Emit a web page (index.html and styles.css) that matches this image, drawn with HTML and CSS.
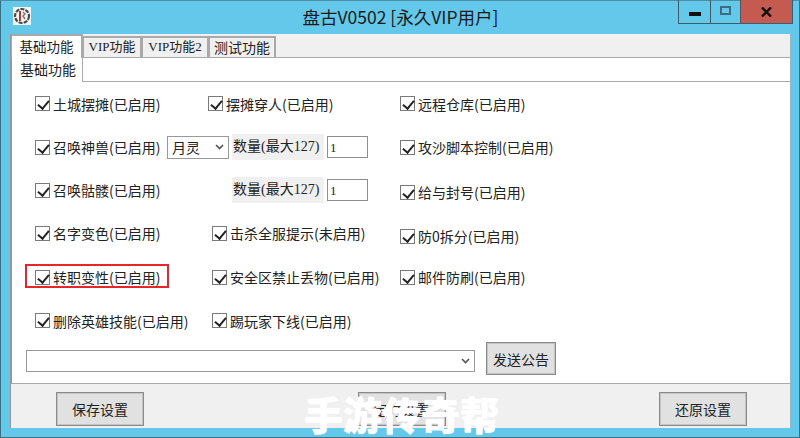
FILE: index.html
```html
<!DOCTYPE html>
<html lang="zh-CN">
  <head>
    <meta charset="UTF-8" />
    <title>盘古V0502</title>
    <link rel="stylesheet" href="styles.css">
  </head>
  <body>
    <div class="window">
      <!-- Title bar -->
      <header class="titlebar">
        <svg class="app-icon" width="18" height="18" viewBox="0 0 18 18">
          <rect width="18" height="18" fill="#f6f3f1" />
          <circle cx="9" cy="9" r="7" fill="none" stroke="#4a4a4a" stroke-width="2.2" stroke-dasharray="4 1.2" />
          <path d="M7 4v10" fill="none" stroke="#b33" stroke-width="2" />
          <path d="M10 5l2 2-2 2 2 3" fill="none" stroke="#777" stroke-width="1.4" />
        </svg>
        <h1 class="title">盘古V0502 [永久VIP用户]</h1>
        <div class="win-buttons">
          <div class="win-btn win-min"><span class="min-glyph"></span></div>
          <div class="win-btn win-max"><span class="max-glyph"></span></div>
          <div class="win-btn win-close">
            <svg width="11" height="10" viewBox="0 0 11 10"><path d="M1 0.5l9 9M10 0.5l-9 9" stroke="#111" stroke-width="2.4" fill="none" /></svg>
          </div>
        </div>
      </header>

      <div class="client">
        <!-- Outer tabs -->
        <div class="tabs">
          <div class="tab tab-active">基础功能</div>
          <div class="tab tab-vip">VIP功能</div>
          <div class="tab tab-vip2">VIP功能2</div>
          <div class="tab tab-test">测试功能</div>
        </div>

        <div class="panel">
          <div class="subtabs">
            <div class="subtab">基础功能</div>
          </div>

          <div class="form">
            <div class="row row-1">
              <label class="check col-a"><span class="box"></span>土城摆摊(已启用)</label>
              <label class="check col-b"><span class="box"></span>摆摊穿人(已启用)</label>
              <label class="check col-c"><span class="box"></span>远程仓库(已启用)</label>
            </div>
            <div class="row row-2">
              <div class="col-wide">
                <label class="check"><span class="box"></span>召唤神兽(已启用)</label>
                <div class="select">月灵<svg width="9" height="6" viewBox="0 0 9 6"><path d="M1 1l3.5 3.5L8 1" fill="none" stroke="#555" stroke-width="1.6" /></svg></div>
                <span class="qty-label">数量(最大127)</span>
                <div class="qty-input">1</div>
              </div>
              <label class="check col-c"><span class="box"></span>攻沙脚本控制(已启用)</label>
            </div>
            <div class="row row-3">
              <div class="col-wide">
                <label class="check check-fixed"><span class="box"></span>召唤骷髅(已启用)</label>
                <span class="qty-label">数量(最大127)</span>
                <div class="qty-input">1</div>
              </div>
              <label class="check col-c col-c-low"><span class="box"></span>给与封号(已启用)</label>
            </div>
            <div class="row row-4">
              <label class="check col-a-short"><span class="box"></span>名字变色(已启用)</label>
              <label class="check col-b"><span class="box"></span>击杀全服提示(未启用)</label>
              <label class="check col-c col-c-lower"><span class="box"></span>防0拆分(已启用)</label>
            </div>
            <div class="row row-5">
              <label class="check col-a-short"><span class="box"></span>转职变性(已启用)<span class="highlight"></span></label>
              <label class="check col-b"><span class="box"></span>安全区禁止丢物(已启用)</label>
              <label class="check col-c"><span class="box"></span>邮件防刷(已启用)</label>
            </div>
            <div class="row row-6">
              <label class="check col-a-short"><span class="box"></span>删除英雄技能(已启用)</label>
              <label class="check col-b"><span class="box"></span>踢玩家下线(已启用)</label>
            </div>
          </div>

          <div class="notice">
            <div class="combo"><svg width="9" height="6" viewBox="0 0 9 6"><path d="M1 1l3.5 3.5L8 1" fill="none" stroke="#555" stroke-width="1.6" /></svg></div>
            <button class="btn btn-send">发送公告</button>
          </div>
        </div>

        <div class="actions">
          <button class="btn">保存设置</button>
          <button class="btn">定时设置</button>
          <button class="btn">还原设置</button>
        </div>
      </div>

      <div class="watermark">手游传奇帮</div>
    </div>
  </body>
</html>
```
FILE: styles.css
```css
* {
  margin: 0;
  padding: 0;
  box-sizing: border-box;
  font-family: "Noto Sans CJK SC", "Liberation Sans", sans-serif;
}

body {
  width: 800px;
  height: 438px;
  overflow: hidden;
  background-color: #63c8ea;
  color: #222;
  font-size: 14px;
}

.window {
  position: relative;
  width: 800px;
  height: 438px;
  display: flex;
  flex-direction: column;
  background-color: #63c8ea;
  border: 1px solid #3d6f80;
  border-top-color: #4d8ea5;
  padding: 0 8px 9px 9px;
}

/* Title bar */
.titlebar {
  position: relative;
  height: 33px;
  flex-shrink: 0;
  display: flex;
  justify-content: center;
  align-items: flex-start;
}

.app-icon {
  position: absolute;
  left: 3px;
  top: 6px;
}

.title {
  font-size: 17.5px;
  font-weight: normal;
  line-height: 22px;
  margin-top: 5px;
  color: #1a1a1a;
}

.win-buttons {
  position: absolute;
  top: -1px;
  right: -2px;
  display: flex;
  height: 24px;
}

.win-btn {
  height: 24px;
  display: flex;
  align-items: center;
  justify-content: center;
  border: 1px solid #3e5d6a;
  border-top: none;
}

.win-min {
  width: 33px;
}

.win-max {
  width: 30px;
  border-left: none;
}

.win-close {
  width: 52px;
  border-left: none;
  background-color: #c45a50;
}

.min-glyph {
  width: 12px;
  height: 4px;
  margin-top: 5px;
  background-color: #111;
}

.max-glyph {
  width: 11px;
  height: 9px;
  margin-bottom: 3px;
  border: 2px solid #3f6d80;
}

/* Client area */
.client {
  flex: 1;
  display: flex;
  flex-direction: column;
  background-color: #f0f0f0;
  border-right: 1px solid #9fb4bd;
  border-left: 1px solid #8a9aa0;
}

.tabs {
  display: flex;
  height: 23px;
}

.tab {
  height: 21px;
  border: solid #a9a9a9;
  border-width: 2px 2px 0 1px;
  margin-top: 2px;
  line-height: 18px;
  font-size: 13px;
  text-align: center;
  white-space: nowrap;
  background-color: #f0f0f0;
}

.tab-active {
  width: 72px;
  margin-top: 0;
  height: 24px;
  background-color: #fff;
  font-size: 13.5px;
  line-height: 21px;
  position: relative;
  z-index: 1;
}

.tab-vip,
.tab-vip2 {
  font-family: "Liberation Serif", "Noto Sans CJK SC", serif;
}

.tab-vip {
  width: 59px;
}

.tab-vip2 {
  width: 67px;
}

.tab-test {
  width: 67px;
  font-size: 14px;
}

.panel {
  height: 327px;
  display: flex;
  flex-direction: column;
  background-color: #fff;
  border-top: 1px solid #a9a9b0;
  border-left: 1px solid #999;
  border-bottom: 1px solid #a9a9b0;
}

.subtabs {
  height: 24px;
  flex-shrink: 0;
  border-bottom: 1px solid #a9a9b0;
  display: flex;
}

.subtab {
  width: 71px;
  height: 24px;
  background-color: #fff;
  border-right: 1px solid #a9a9b0;
  padding-left: 8px;
  line-height: 23px;
}

/* Checkbox rows */
.form {
  height: 260px;
  padding-left: 23px;
  display: flex;
  flex-direction: column;
}

.row {
  display: flex;
  align-items: center;
  height: 44px;
}

.row-3 {
  height: 43px;
}

.row-5 {
  height: 45px;
}

.row-6 {
  height: 43px;
}

.check {
  display: flex;
  align-items: center;
  gap: 3px;
  line-height: 20px;
  white-space: nowrap;
  position: relative;
}

.box {
  width: 15px;
  height: 15px;
  flex-shrink: 0;
  border: 1px solid #7a7a7a;
  background-color: #fff;
  position: relative;
}

.box::after {
  content: "";
  position: absolute;
  left: 4px;
  top: 1px;
  width: 5px;
  height: 9px;
  border: solid #222;
  border-width: 0 2.5px 2.5px 0;
  transform: rotate(40deg);
}

.col-a {
  width: 173px;
}

.col-a-short {
  width: 177px;
}

.col-b {
  width: 188px;
}

.row-1 .col-b {
  width: 192px;
}

.col-c-low {
  margin-top: 4px;
}

.col-c-lower {
  margin-top: 6px;
}

.col-wide {
  width: 365px;
  display: flex;
  align-items: center;
}

.col-wide .check {
  width: 132px;
}

.col-wide .check-fixed {
  width: 197px;
}

.select {
  width: 62px;
  height: 23px;
  flex-shrink: 0;
  display: flex;
  align-items: center;
  justify-content: space-between;
  padding: 0 4px;
  border: 1px solid #999;
  background-color: #fff;
  margin-right: 3px;
}

.qty-label {
  width: 92px;
  height: 26px;
  flex-shrink: 0;
  background-color: #f0f0f0;
  line-height: 25px;
  font-family: "Liberation Serif", "Noto Sans CJK SC", serif;
  padding-left: 1px;
  white-space: nowrap;
  margin-right: 3px;
}

.qty-input {
  width: 41px;
  height: 22px;
  border: 1px solid #8e8e8e;
  background-color: #fff;
  font-family: "Liberation Serif", serif;
  font-size: 13px;
  line-height: 21px;
  padding-left: 2px;
}

/* Red box drawn over the screenshot */
.highlight {
  position: absolute;
  left: -10px;
  top: -3px;
  width: 144px;
  height: 24px;
  border: 2px solid #e8262a;
}

/* Notice row */
.notice {
  display: flex;
  align-items: flex-start;
  gap: 11px;
  padding-left: 14px;
}

.combo {
  width: 449px;
  height: 22px;
  margin-top: 8px;
  display: flex;
  align-items: center;
  justify-content: flex-end;
  padding-right: 4px;
  border: 1px solid #999;
  background-color: #fff;
}

.btn {
  width: 88px;
  height: 34px;
  border: 1px solid #8a8a8a;
  outline: 1px solid #c4c4c4;
  outline-offset: -2px;
  background-color: #e1e1e1;
  font-size: 14px;
  color: #222;
}

.btn-send {
  width: 70px;
  height: 33px;
}

/* Bottom buttons */
.actions {
  flex: 1;
  display: flex;
  justify-content: space-between;
  align-items: center;
  padding: 5px 43px 0 45px;
}

.watermark {
  position: absolute;
  left: 303px;
  top: 387px;
  font-size: 39px;
  line-height: 50px;
  font-weight: 900;
  color: #fff;
  text-shadow: 0 0 1px #fff;
  white-space: nowrap;
}
```
